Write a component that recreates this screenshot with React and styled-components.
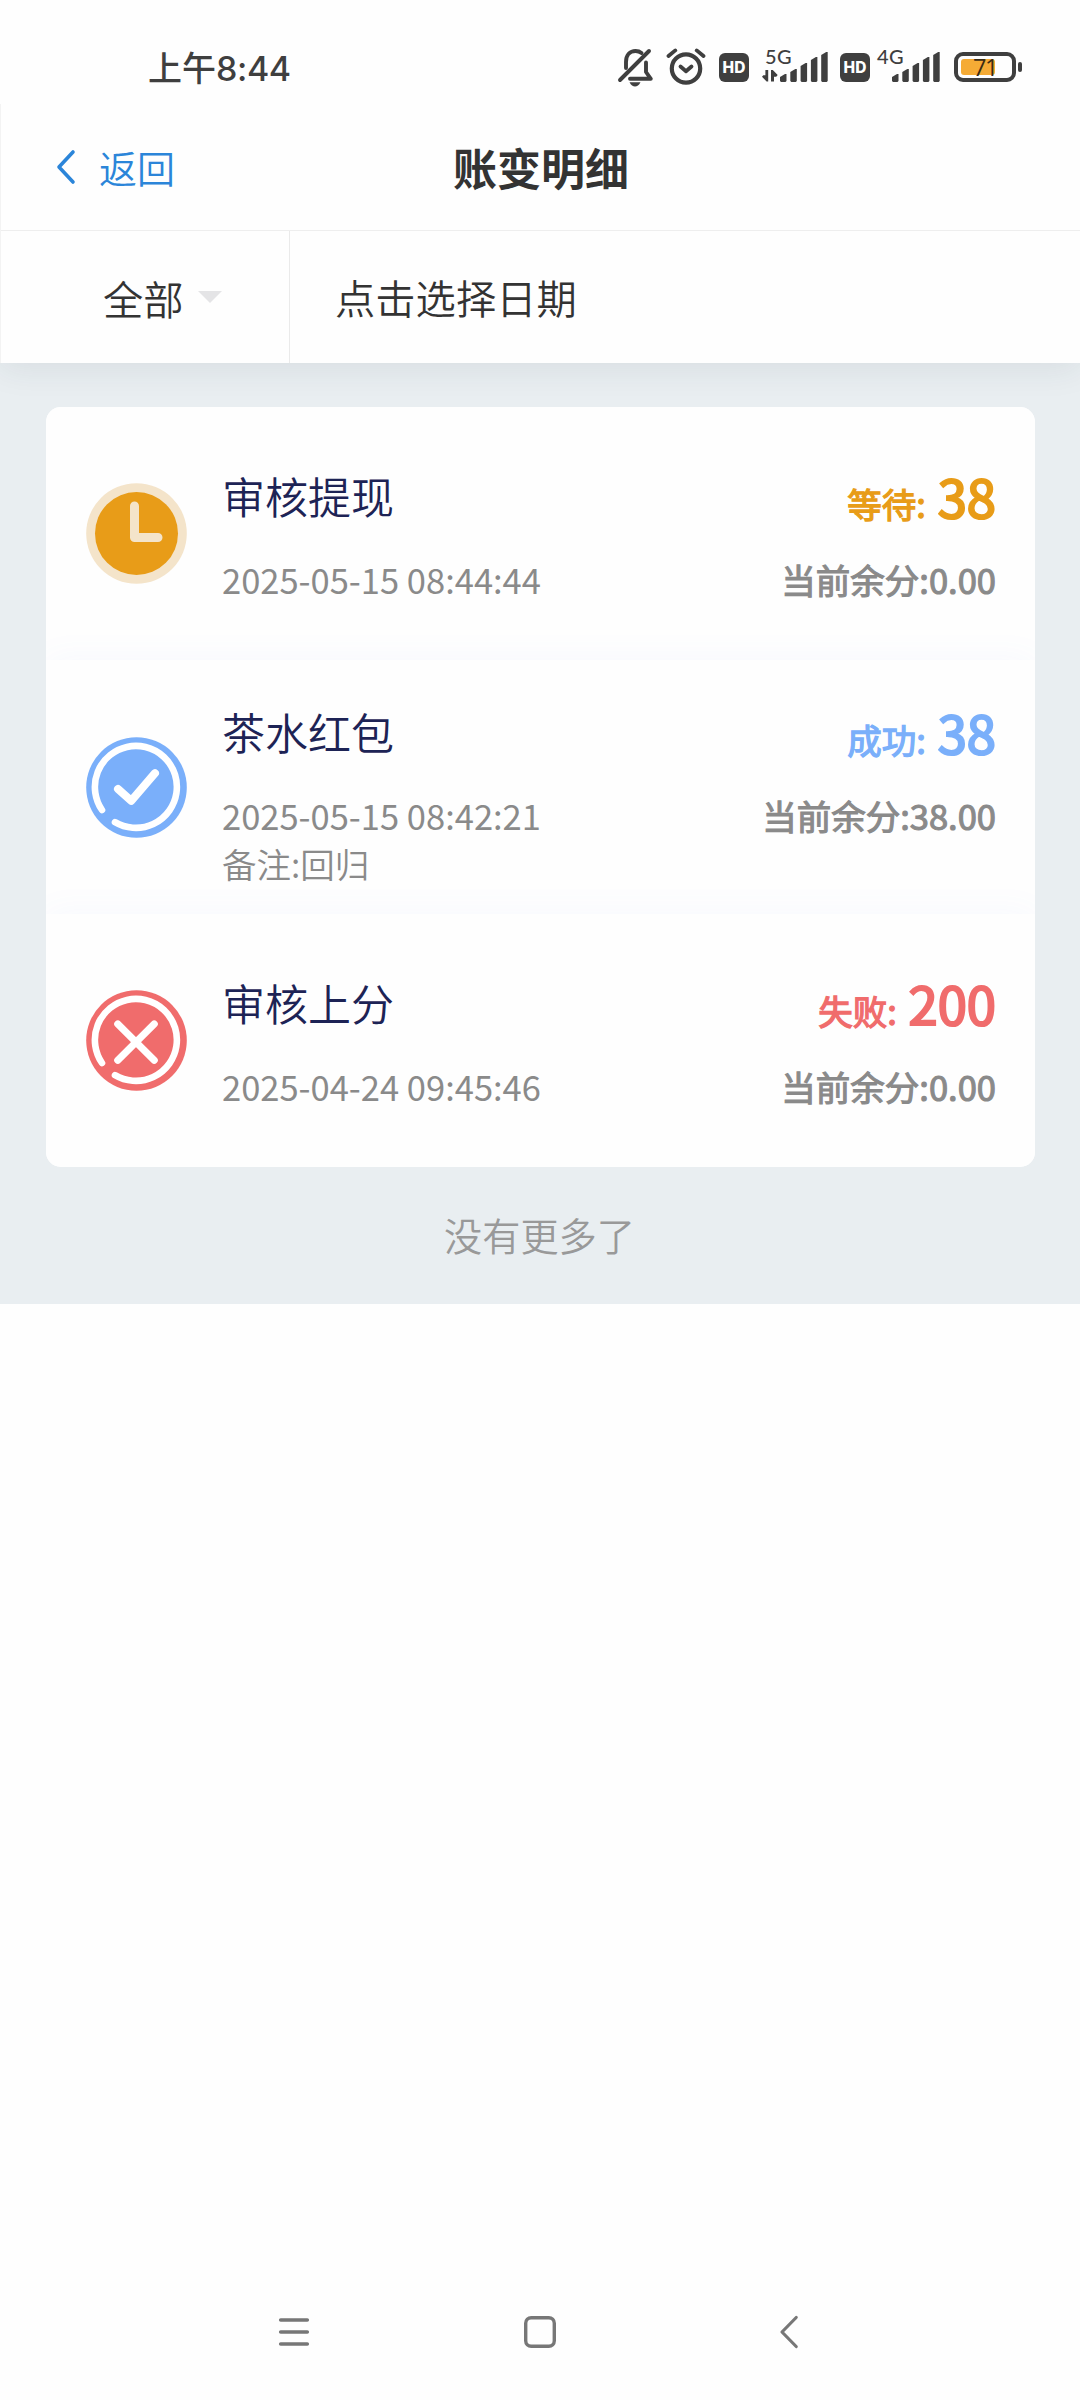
import React from "react";
import styled, { createGlobalStyle } from "styled-components";

const records = [
  {
    id: 1,
    title: "审核提现",
    time: "2025-05-15 08:44:44",
    status: "wait",
    amount: "38",
    balance: "0.00",
  },
  {
    id: 2,
    title: "茶水红包",
    time: "2025-05-15 08:42:21",
    note: "回归",
    status: "success",
    amount: "38",
    balance: "38.00",
  },
  {
    id: 3,
    title: "审核上分",
    time: "2025-04-24 09:45:46",
    status: "fail",
    amount: "200",
    balance: "0.00",
  },
];

const statuses = {
  wait: { label: "等待", color: "#e89c18" },
  success: { label: "成功", color: "#7aaffa" },
  fail: { label: "失败", color: "#f06c6c" },
};

export default function App() {
  return (
    <Page>
      <GlobalStyle />
      <StatusBar>
        <Clock>
          上午<span>8:44</span>
        </Clock>
        <MutedBell />
        <Alarm />
        <Hd>HD</Hd>
        <Signal label="5G" width={66} data />
        <Hd $tight>HD</Hd>
        <Signal label="4G" width={63} />
        <Battery level={71} />
      </StatusBar>

      <Top>
        <Header>
          <Back>
            <svg width="20" height="36" viewBox="0 0 20 36" fill="none">
              <path d="M17 3L3 18L17 33" stroke="#2b85d9" strokeWidth="3.6" strokeLinecap="round" strokeLinejoin="round" />
            </svg>
            返回
          </Back>
          <h1>账变明细</h1>
        </Header>
        <Filters>
          <TypeFilter>
            全部
            <Caret />
          </TypeFilter>
          <DateFilter>点击选择日期</DateFilter>
        </Filters>
      </Top>

      <Content>
        <Card>
          {records.map((item) => (
            <Record key={item.id} item={item} />
          ))}
        </Card>
        <NoMore>没有更多了</NoMore>
      </Content>

      <NavBar>
        <svg width="34" height="36" viewBox="0 0 34 36">
          <path d="M3.7 6H30.3M3.7 18H30.3M3.7 30H30.3" stroke="#777" strokeWidth="3.6" strokeLinecap="round" />
        </svg>
        <svg width="36" height="36" viewBox="0 0 36 36">
          <rect x="3.7" y="3.7" width="28.6" height="28.6" rx="5.5" fill="none" stroke="#777" strokeWidth="3.4" />
        </svg>
        <svg width="22" height="36" viewBox="0 0 22 36" fill="none">
          <path d="M18.2 3.5L4 18L18.2 32.5" stroke="#777" strokeWidth="3.2" strokeLinecap="round" strokeLinejoin="round" />
        </svg>
      </NavBar>
    </Page>
  );
}

function Record({ item }) {
  const status = statuses[item.status];
  return (
    <Row>
      <StatusIcon type={item.status} color={status.color} />
      <Info>
        <Line>
          <Title>{item.title}</Title>
          <Amount $color={status.color}>
            {status.label}:<strong> {item.amount}</strong>
          </Amount>
        </Line>
        <Detail>
          <span>{item.time}</span>
          <Balance>当前余分:{item.balance}</Balance>
        </Detail>
        {item.note && <Note>备注:{item.note}</Note>}
      </Info>
    </Row>
  );
}

function StatusIcon({ type, color }) {
  if (type === "wait") {
    return (
      <svg width="101" height="101" viewBox="0 0 101 101" fill="none">
        <circle cx="50.5" cy="50.5" r="50.3" fill="#f4e4ca" />
        <circle cx="50.5" cy="50.5" r="41.5" fill={color} />
        <path d="M48.5 23V54.5H72" stroke="#f4e4ca" strokeWidth="9" strokeLinecap="round" strokeLinejoin="round" />
      </svg>
    );
  }
  return (
    <svg width="101" height="101" viewBox="0 0 101 101" fill="none" stroke="#fff" strokeLinecap="round" strokeLinejoin="round">
      <circle cx="50.5" cy="50.5" r="50.3" fill={color} stroke="none" />
      <path d="M16 73A41 41 0 1 1 29 85.2" strokeWidth="6.6" />
      {type === "success" ? (
        <path d="M32 52L45.2 63.8L69 36.2" strokeWidth="8" />
      ) : (
        <path d="M31.8 34L68.2 70.2M68.2 34L31.8 70.2" strokeWidth="7.2" />
      )}
    </svg>
  );
}

function MutedBell() {
  return (
    <svg width="36" height="40" viewBox="0 0 36 40" fill="none" stroke="#3f3f3f" strokeWidth="3.9" strokeLinecap="round" strokeLinejoin="round">
      <path d="M3 33L32 4" />
      <path d="M9 21V15C9 8 13 4 18.5 4C21 4 23 4.8 24.5 6" />
      <path d="M13 31.8H33.8L29 25V15.5" />
      <path d="M12.5 35.3H23.5C22 38.4 20 39.5 18 39.5S14 38.4 12.5 35.3Z" fill="#3f3f3f" stroke="none" />
    </svg>
  );
}

function Alarm() {
  return (
    <AlarmSvg width="40" height="38" viewBox="0 0 40 38" fill="none" stroke="#3f3f3f" strokeWidth="4.2" strokeLinecap="round" strokeLinejoin="round">
      <circle cx="20" cy="20.5" r="14.2" />
      <path d="M14.5 18.5L20 23.3L25.5 18.5" strokeWidth="3.8" />
      <path d="M2.5 8L9.3 2.4M37.5 8L30.7 2.4" strokeWidth="3.8" />
    </AlarmSvg>
  );
}

function Signal({ label, width, data }) {
  const heights = [8, 13, 19, 25, 30];
  return (
    <SignalBox $width={width}>
      <small>{label}</small>
      {data && (
        <svg width="16" height="12" viewBox="0 0 16 12" fill="#3f3f3f">
          <path d="M3.4 0H6.2V11.5H4.6L0 6.8L1.3 5.2H3.4ZM9 0H10.8L15.7 5L14.2 6.7H12V11.5H9Z" />
        </svg>
      )}
      <Bars width="48" height="30" viewBox="0 0 48 30" fill="#3f3f3f">
        {heights.map((h, i) => {
          const x = i * 10.3;
          return (
            <path
              key={h}
              d={`M${x} ${33 - h}L${x + 5} ${30 - h}H${x + 6.5}V29L${x + 5.5} 30H${x + 1}L${x} 29Z`}
            />
          );
        })}
      </Bars>
    </SignalBox>
  );
}

function Battery({ level }) {
  return (
    <BatteryBox>
      <Shell>
        <Charge style={{ width: `${level}%` }} />
        <b>{level}</b>
      </Shell>
      <Nub />
    </BatteryBox>
  );
}

const GlobalStyle = createGlobalStyle`
  * {
    box-sizing: border-box;
  }
  body {
    margin: 0;
    background: #fefefe;
    font-family: "Noto Sans CJK SC", sans-serif;
  }
`;

const Page = styled.div`
  display: flex;
  flex-direction: column;
  width: 1080px;
  height: 2400px;
  overflow: hidden;
`;

const StatusBar = styled.div`
  display: flex;
  align-items: center;
  height: 104px;
  padding: 30px 58px 0 148px;
  color: #3f3f3f;
`;

const Clock = styled.div`
  flex: 1;
  padding-top: 2px;
  font-size: 34px;
  font-weight: 500;
  line-height: 50px;

  span {
    font-family: Inter, sans-serif;
    font-size: 34px;
    font-weight: 550;
    letter-spacing: -0.4px;
  }
`;

const AlarmSvg = styled.svg`
  margin: 0 13px;
`;

const Hd = styled.div`
  width: 30px;
  height: 29px;
  margin: 0 ${(props) => (props.$tight ? "7px 0 12px" : "13px 0 0")};
  border-radius: 6px;
  background: #3f3f3f;
  color: #fff;
  font: 800 15.5px/29px Inter, sans-serif;
  text-align: center;
`;

const SignalBox = styled.div`
  position: relative;
  display: flex;
  align-items: flex-end;
  justify-content: space-between;
  width: ${(props) => props.$width}px;
  height: 30px;

  small {
    position: absolute;
    left: ${(props) => (props.$width > 63 ? 3 : 0)}px;
    top: -8px;
    font: 500 20px/24px Lato, sans-serif;
    letter-spacing: 0.5px;
  }
`;

const Bars = styled.svg`
  margin-left: auto;
`;

const BatteryBox = styled.div`
  display: flex;
  align-items: center;
  gap: 2px;
  margin-left: 14px;
`;

const Shell = styled.div`
  position: relative;
  width: 62px;
  height: 30px;
  padding: 3px;
  border: 4px solid #3f3f3f;
  border-radius: 9px;

  b {
    position: absolute;
    inset: 0;
    color: #3a2c14;
    font: 500 23.5px/23px "Open Sans", sans-serif;
    text-align: center;
    letter-spacing: -1.5px;
  }
`;

const Charge = styled.div`
  height: 16px;
  border-radius: 3px;
  background: #f5ab35;
`;

const Nub = styled.div`
  width: 4px;
  height: 10px;
  border-radius: 2px;
  background: #3f3f3f;
`;

const Top = styled.div`
  position: relative;
  height: 259px;
  border-left: 1px solid #f3f3f3;
  background: #fefefe;
  box-shadow: 0 5px 32px rgba(30, 60, 70, 0.09);
  clip-path: inset(0 0 -60px 0);
`;

const Header = styled.div`
  display: grid;
  grid-template-columns: 1fr auto 1fr;
  align-items: center;
  height: 127px;
  padding-left: 55px;
  border-bottom: 1px solid #eee;

  h1 {
    margin: 0;
    padding-right: 54px;
    color: #333;
    font-size: 44px;
    font-weight: 700;
    line-height: 64px;
  }
`;

const Back = styled.div`
  display: flex;
  align-items: center;
  gap: 23px;
  color: #2b85d9;
  font-size: 38px;
  font-weight: 350;
  line-height: 56px;
`;

const Filters = styled.div`
  display: flex;
  height: 132px;
  color: #333;
  font-size: 40.3px;
  font-weight: 350;
`;

const TypeFilter = styled.div`
  display: flex;
  align-items: center;
  gap: 14px;
  width: 289px;
  padding-left: 102px;
  border-right: 1px solid #eaeaea;
`;

const Caret = styled.i`
  border: 12px solid transparent;
  border-top-color: #e4e4e6;
  border-bottom: 0;
`;

const DateFilter = styled.div`
  display: flex;
  align-items: center;
  padding: 0 0 2px 45px;
`;

const Content = styled.div`
  height: 941px;
  padding: 44px 45px 0 46px;
  background: #e9eef1;
`;

const Card = styled.div`
  height: 760px;
  overflow: hidden;
  border-radius: 15px;
  background: #fefefe;
`;

const Row = styled.div`
  display: flex;
  align-items: center;
  gap: 35px;
  height: 253.4px;
  padding: 0 39px 0 40px;
  background: #fefefe;
  box-shadow: 0 0 34px rgba(90, 130, 255, 0.05);
`;

const Info = styled.div`
  flex: 1;
  padding-top: 5px;
`;

const Line = styled.div`
  display: flex;
  justify-content: space-between;
  height: 86px;
`;

const Title = styled.div`
  color: #1d2355;
  font-size: 43px;
  font-weight: 350;
  line-height: 64px;
`;

/* the bold text keeps the regular digit widths, so it is thickened by a stroke */
const Amount = styled.div`
  color: ${(props) => props.$color};
  font-size: 34.5px;
  line-height: 64px;
  -webkit-text-stroke: 1.3px;

  strong {
    font-size: 52.5px;
    font-weight: 400;
    -webkit-text-stroke: 2.2px;
  }
`;

const Detail = styled.div`
  display: flex;
  justify-content: space-between;
  height: 60px;
  color: #8a8a8a;
  font-size: 34.5px;
  line-height: 60px;
`;

const Balance = styled.span`
  -webkit-text-stroke: 1.1px;
`;

const Note = styled.div`
  color: #8a8a8a;
  font-size: 34.5px;
  font-weight: 350;
  line-height: 36px;
`;

const NoMore = styled.div`
  margin-top: 39px;
  padding-right: 2px;
  color: #999;
  font-size: 38.2px;
  font-weight: 350;
  line-height: 58px;
  text-align: center;
`;

const NavBar = styled.div`
  display: grid;
  grid-template-columns: 245px 256px 22px;
  align-items: center;
  margin-top: auto;
  height: 136px;
  padding-left: 277px;
`;
